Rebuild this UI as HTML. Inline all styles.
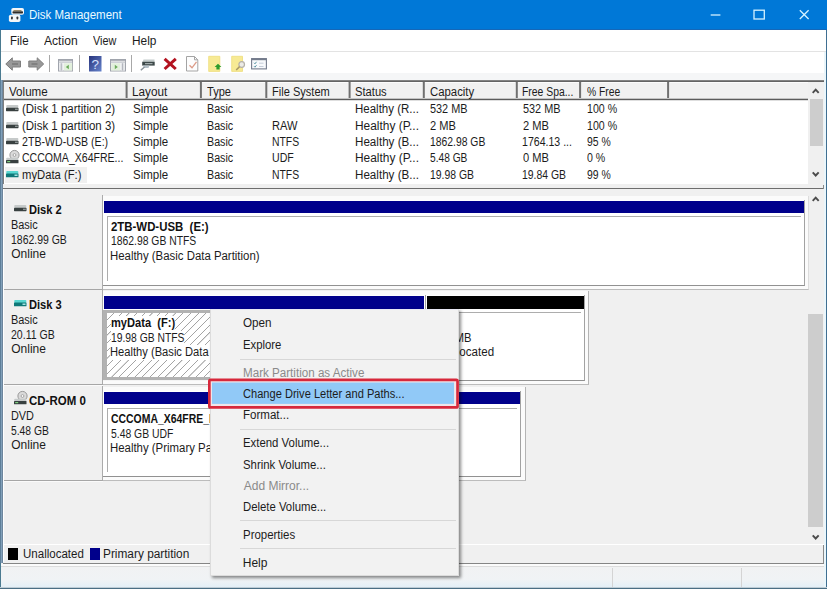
<!DOCTYPE html>
<html><head><meta charset="utf-8"><title>Disk Management</title>
<style>
html,body{margin:0;padding:0;}
body{width:827px;height:589px;position:relative;overflow:hidden;background:#f0f0f0;font-family:"Liberation Sans",sans-serif;font-size:12px;color:#1a1a1a;}
.a{position:absolute;}
.t{position:absolute;white-space:nowrap;line-height:14px;font-size:12px;color:#1c1c1c;transform-origin:0 50%;}
.b{font-weight:bold;color:#111;}
.g{color:#8a8a8a;}
svg{position:absolute;overflow:visible;}
</style></head><body>
<div class="a" style="left:0px;top:0px;width:827px;height:30px;background:#0078d7;"></div>
<div class="t " style="left:30px;top:7.75px;color:#eafaff;margin-left:-0.96px;transform:scaleX(0.958);">Disk Management</div>
<svg style="left:8px;top:7px" width="17" height="16" viewBox="0 0 17 16"><rect x="3.300" y="1" width="12.700" height="6.800" rx="1.800" fill="#f4f6f8"/><rect x="4.500" y="4.200" width="10.500" height="2.300" rx="0.800" fill="#2c2c2c"/><rect x="5.500" y="3" width="8" height="1.200" fill="#9a8a6a"/><rect x="0.900" y="7.800" width="11.500" height="7.200" rx="1.800" fill="#f4f6f8"/><rect x="3" y="9.500" width="1.800" height="3" rx="0.800" fill="#333"/><rect x="8.500" y="9.500" width="1.800" height="3" rx="0.800" fill="#333"/></svg>
<svg style="left:700px;top:0" width="127" height="30" viewBox="0 0 127 30" fill="none" stroke="#d4f2ff" stroke-width="1.300"><path d="M10.700 15h9.700"/><rect x="54" y="10.200" width="10.300" height="8.800"/><path d="M99.800 10.200l8.800 8.800M108.600 10.200l-8.800 8.800"/></svg>
<div class="a" style="left:1px;top:30px;width:825px;height:21px;background:#fff;"></div>
<div class="t " style="left:10.75px;top:33.5px;margin-left:-0.96px;transform:scaleX(0.958);">File</div>
<div class="t " style="left:43.75px;top:33.5px;margin-left:-0.00px;transform:scaleX(1.008);">Action</div>
<div class="t " style="left:93px;top:33.5px;margin-left:-0.00px;transform:scaleX(0.903);">View</div>
<div class="t " style="left:132.5px;top:33.5px;margin-left:-0.99px;transform:scaleX(0.989);">Help</div>
<div class="a" style="left:1px;top:51px;width:825px;height:1px;background:#e3e3e3;"></div>
<div class="a" style="left:1px;top:52px;width:825px;height:21.3px;background:#fff;"></div>
<div class="a" style="left:1px;top:73px;width:825px;height:7px;background:#f5f6f7;"></div>
<svg style="left:5px;top:57px" width="16" height="14" viewBox="0 0 16 14"><path d="M0.800 7L7.300 0.800V4H15.500V10H7.300V13.200Z" fill="#999" stroke="#7e7e7e" stroke-width="1"/><rect x="7" y="6.200" width="6" height="1.600" fill="#7c7c7c"/></svg>
<svg style="left:28px;top:57px" width="16" height="14" viewBox="0 0 16 14"><path d="M15.700 7L9.200 0.800V4H0.800V10H9.200V13.200Z" fill="#999" stroke="#7e7e7e" stroke-width="1"/><rect x="3.500" y="6.200" width="6" height="1.600" fill="#7c7c7c"/></svg>
<div class="a" style="left:49.0px;top:55px;width:1px;height:17px;background:#a8a8a8;"></div>
<div class="a" style="left:79.0px;top:55px;width:1px;height:17px;background:#a8a8a8;"></div>
<div class="a" style="left:131.0px;top:55px;width:1px;height:17px;background:#a8a8a8;"></div>
<svg style="left:58px;top:58.8px" width="15" height="12.5" viewBox="0 0 15 12.5"><rect x="0.500" y="0.500" width="14" height="11.500" fill="#f6f6f6" stroke="#a0a4ac"/><rect x="0.500" y="0.500" width="14" height="1.300" fill="#a0a4ac"/><rect x="0.500" y="2.600" width="14" height="1" fill="#b4b8c0"/><rect x="1.300" y="4.200" width="4" height="7.300" fill="#e4e6ea"/><rect x="2.800" y="4.200" width="0.900" height="7.300" fill="#a8acb4"/><rect x="6" y="4.200" width="8.200" height="7.300" fill="#e2f0dc"/><path d="M10.800 5.800L7.800 8L10.800 10.200Z" fill="#6aaa5a"/></svg>
<svg style="left:89px;top:56px" width="12.5" height="15.5" viewBox="0 0 12.5 15.5"><defs><linearGradient id="hg" x1="0" y1="0" x2="1" y2="1"><stop offset="0" stop-color="#28347c"/><stop offset="1" stop-color="#6684cc"/></linearGradient></defs><rect x="0" y="0" width="12.500" height="15.500" fill="url(#hg)"/><text x="6.300" y="12.800" text-anchor="middle" font-family="Liberation Sans, sans-serif" font-size="13.500" fill="#d6e2ff">?</text></svg>
<svg style="left:110px;top:58.8px" width="16" height="12.5" viewBox="0 0 16 12.5"><rect x="0.500" y="0.500" width="15" height="11.500" fill="#f6f6f6" stroke="#a0a4ac"/><rect x="0.500" y="0.500" width="15" height="1.300" fill="#a0a4ac"/><rect x="0.500" y="2.600" width="15" height="1" fill="#b4b8c0"/><rect x="10.700" y="4.200" width="4" height="7.300" fill="#e4e6ea"/><rect x="12.200" y="4.200" width="0.900" height="7.300" fill="#a8acb4"/><rect x="1.300" y="4.200" width="8.800" height="7.300" fill="#e2f0dc"/><path d="M4.800 5.800L7.800 8L4.800 10.200Z" fill="#6aaa5a"/></svg>
<svg style="left:140px;top:59px" width="15" height="12" viewBox="0 0 15 12"><path d="M3.500 0.500H14.500V3H2.500Z" fill="#c4cccc"/><path d="M2.200 2.800H14.700V6.600H2.200Z" fill="#3c4848"/><rect x="5" y="4.100" width="7.500" height="1.100" fill="#aab4b4"/><path d="M3 6.600H9.500L8.500 9H4Z" fill="#b4c0c8"/><path d="M4.500 8L0.800 11.300" stroke="#8a949a" stroke-width="1.500" fill="none"/></svg>
<svg style="left:163px;top:57px" width="14.5" height="13.5" viewBox="0 0 14.5 13.5"><path d="M1.600 1.800L12.800 12M12.800 1.800L1.600 12" stroke="#b3121f" stroke-width="3" fill="none"/></svg>
<svg style="left:186px;top:56px" width="12.5" height="15.5" viewBox="0 0 12.5 15.5"><path d="M0.500 0.500H8.500L11.800 3.800V15H0.500Z" fill="#fdfdfd" stroke="#a4a4a4"/><path d="M8.500 0.500V3.800H11.800" fill="none" stroke="#a4a4a4"/><path d="M3.500 9.300L6 11.800L10.500 5.800" fill="none" stroke="#dc9a86" stroke-width="1.300"/></svg>
<svg style="left:208px;top:56px" width="14" height="15.5" viewBox="0 0 14 15.5"><path d="M0.700 0.300H11.800V15.400H0.700Z" fill="#f7ea94" stroke="#eedc78" stroke-width="0.800"/><path d="M10 7.800L13.400 11H11.600V13.600H8.400V11H6.600Z" fill="#2c9c2c"/></svg>
<svg style="left:231px;top:56px" width="14.5" height="15.5" viewBox="0 0 14.5 15.5"><path d="M0.700 0.300H11.500V15.400H0.700Z" fill="#f7ea94" stroke="#eedc78" stroke-width="0.800"/><circle cx="10.700" cy="8.500" r="2.800" fill="#ecebe6" stroke="#b4b0a8" stroke-width="1.200"/><path d="M8.600 10.600L5.200 14" stroke="#a89868" stroke-width="1.500"/></svg>
<svg style="left:251px;top:58px" width="16" height="11.5" viewBox="0 0 16 11.5"><rect x="0.600" y="0.600" width="14.800" height="10.300" fill="#f8fafc" stroke="#747c8c" stroke-width="1.100"/><rect x="0.600" y="0.600" width="14.800" height="1.600" fill="#747c8c"/><path d="M3 4.800l1 1l1.500-2M3 8.200l1 1l1.500-2" fill="none" stroke="#4a8a9a" stroke-width="0.900"/><path d="M8 5.200h4.500M8 8.500h4.500" stroke="#c4ccd8" stroke-width="1"/></svg>
<div class="a" style="left:3px;top:82px;width:821px;height:102px;background:#fff;"></div>
<div class="a" style="left:3px;top:82px;width:1px;height:102px;background:#7f7f7f;"></div>
<div class="a" style="left:4px;top:82px;width:804px;height:17px;background:#f1f1f1;"></div>
<div class="a" style="left:4px;top:82px;width:804px;height:1px;background:#fcfcfc;"></div>
<div class="a" style="left:125px;top:82px;width:1px;height:17px;background:#bdbdbd;"></div>
<div class="a" style="left:126px;top:82px;width:1px;height:17px;background:#707070;"></div>
<div class="a" style="left:127px;top:82px;width:1px;height:17px;background:#a4a4a4;"></div>
<div class="a" style="left:199px;top:82px;width:1px;height:17px;background:#e4e4e4;"></div>
<div class="a" style="left:200px;top:82px;width:1px;height:17px;background:#707070;"></div>
<div class="a" style="left:201px;top:82px;width:1px;height:17px;background:#7d7d7d;"></div>
<div class="a" style="left:265px;top:82px;width:1px;height:17px;background:#979797;"></div>
<div class="a" style="left:266px;top:82px;width:1px;height:17px;background:#707070;"></div>
<div class="a" style="left:267px;top:82px;width:1px;height:17px;background:#cacaca;"></div>
<div class="a" style="left:348px;top:82px;width:1px;height:17px;background:#bdbdbd;"></div>
<div class="a" style="left:349px;top:82px;width:1px;height:17px;background:#707070;"></div>
<div class="a" style="left:350px;top:82px;width:1px;height:17px;background:#a4a4a4;"></div>
<div class="a" style="left:422px;top:82px;width:1px;height:17px;background:#d7d7d7;"></div>
<div class="a" style="left:423px;top:82px;width:1px;height:17px;background:#707070;"></div>
<div class="a" style="left:424px;top:82px;width:1px;height:17px;background:#8a8a8a;"></div>
<div class="a" style="left:515px;top:82px;width:1px;height:17px;background:#d7d7d7;"></div>
<div class="a" style="left:516px;top:82px;width:1px;height:17px;background:#707070;"></div>
<div class="a" style="left:517px;top:82px;width:1px;height:17px;background:#8a8a8a;"></div>
<div class="a" style="left:579px;top:82px;width:1px;height:17px;background:#7d7d7d;"></div>
<div class="a" style="left:580px;top:82px;width:1px;height:17px;background:#707070;"></div>
<div class="a" style="left:581px;top:82px;width:1px;height:17px;background:#e4e4e4;"></div>
<div class="a" style="left:667px;top:82px;width:1px;height:17px;background:#7d7d7d;"></div>
<div class="a" style="left:668px;top:82px;width:1px;height:17px;background:#707070;"></div>
<div class="a" style="left:669px;top:82px;width:1px;height:17px;background:#e4e4e4;"></div>
<div class="a" style="left:4px;top:98px;width:804px;height:1px;background:#c4c4c4;"></div>
<div class="a" style="left:4px;top:99px;width:804px;height:1px;background:#5c5c5c;"></div>
<div class="a" style="left:4px;top:100px;width:804px;height:1px;background:#dedede;"></div>
<div class="a" style="left:3px;top:80px;width:821.5px;height:1px;background:#838383;"></div>
<div class="a" style="left:3px;top:81px;width:821.5px;height:1px;background:#646464;"></div>
<div class="t " style="left:9.25px;top:84.5px;margin-left:-0.00px;transform:scaleX(0.968);">Volume</div>
<div class="t " style="left:133.25px;top:84.5px;margin-left:-0.98px;transform:scaleX(0.979);">Layout</div>
<div class="t " style="left:207.5px;top:84.5px;margin-left:-0.23px;transform:scaleX(0.921);">Type</div>
<div class="t " style="left:272.5px;top:84.5px;margin-left:-0.92px;transform:scaleX(0.922);">File System</div>
<div class="t " style="left:355.5px;top:84.5px;margin-left:-0.47px;transform:scaleX(0.932);">Status</div>
<div class="t " style="left:430.5px;top:84.5px;margin-left:-0.47px;transform:scaleX(0.946);">Capacity</div>
<div class="t " style="left:523px;top:84.5px;margin-left:-0.86px;transform:scaleX(0.865);">Free Spa...</div>
<div class="t " style="left:587.5px;top:84.5px;margin-left:-0.43px;transform:scaleX(0.861);">% Free</div>
<div class="a" style="left:5px;top:167px;width:82px;height:16px;background:#f0f0f0;"></div>
<div class="t " style="left:22.5px;top:102px;margin-left:-0.72px;transform:scaleX(0.956);">(Disk 1 partition 2)</div>
<div class="t " style="left:133.25px;top:102px;margin-left:-0.48px;transform:scaleX(0.958);">Simple</div>
<div class="t " style="left:207.5px;top:102px;margin-left:-0.89px;transform:scaleX(0.893);">Basic</div>
<div class="t " style="left:355.5px;top:102px;margin-left:-0.96px;transform:scaleX(0.958);">Healthy (R...</div>
<div class="t " style="left:430.5px;top:102px;margin-left:-0.45px;transform:scaleX(0.907);">532 MB</div>
<div class="t " style="left:523px;top:102px;margin-left:-0.45px;transform:scaleX(0.907);">532 MB</div>
<div class="t " style="left:587.5px;top:102px;margin-left:-0.89px;transform:scaleX(0.885);">100 %</div>
<div class="t " style="left:22.5px;top:118.5px;margin-left:-0.72px;transform:scaleX(0.956);">(Disk 1 partition 3)</div>
<div class="t " style="left:133.25px;top:118.5px;margin-left:-0.48px;transform:scaleX(0.958);">Simple</div>
<div class="t " style="left:207.5px;top:118.5px;margin-left:-0.89px;transform:scaleX(0.893);">Basic</div>
<div class="t " style="left:272.5px;top:118.5px;margin-left:-0.92px;transform:scaleX(0.925);">RAW</div>
<div class="t " style="left:355.5px;top:118.5px;margin-left:-0.99px;transform:scaleX(0.992);">Healthy (P...</div>
<div class="t " style="left:430.5px;top:118.5px;margin-left:-0.46px;transform:scaleX(0.926);">2 MB</div>
<div class="t " style="left:523px;top:118.5px;margin-left:-0.46px;transform:scaleX(0.926);">2 MB</div>
<div class="t " style="left:587.5px;top:118.5px;margin-left:-0.89px;transform:scaleX(0.885);">100 %</div>
<div class="t " style="left:22.5px;top:135px;margin-left:-0.44px;transform:scaleX(0.885);">2TB-WD-USB (E:)</div>
<div class="t " style="left:133.25px;top:135px;margin-left:-0.48px;transform:scaleX(0.958);">Simple</div>
<div class="t " style="left:207.5px;top:135px;margin-left:-0.89px;transform:scaleX(0.893);">Basic</div>
<div class="t " style="left:272.5px;top:135px;margin-left:-0.87px;transform:scaleX(0.866);">NTFS</div>
<div class="t " style="left:355.5px;top:135px;margin-left:-0.97px;transform:scaleX(0.969);">Healthy (B...</div>
<div class="t " style="left:430.5px;top:135px;margin-left:-0.86px;transform:scaleX(0.864);">1862.98 GB</div>
<div class="t " style="left:523px;top:135px;margin-left:-0.88px;transform:scaleX(0.881);">1764.13 ...</div>
<div class="t " style="left:587.5px;top:135px;margin-left:-0.43px;transform:scaleX(0.868);">95 %</div>
<div class="t " style="left:22.5px;top:151.25px;margin-left:-0.44px;transform:scaleX(0.879);">CCCOMA_X64FRE...</div>
<div class="t " style="left:133.25px;top:151.25px;margin-left:-0.48px;transform:scaleX(0.958);">Simple</div>
<div class="t " style="left:207.5px;top:151.25px;margin-left:-0.89px;transform:scaleX(0.893);">Basic</div>
<div class="t " style="left:272.5px;top:151.25px;margin-left:-0.88px;transform:scaleX(0.882);">UDF</div>
<div class="t " style="left:355.5px;top:151.25px;margin-left:-0.99px;transform:scaleX(0.992);">Healthy (P...</div>
<div class="t " style="left:430.5px;top:151.25px;margin-left:-0.42px;transform:scaleX(0.849);">5.48 GB</div>
<div class="t " style="left:523px;top:151.25px;margin-left:-0.46px;transform:scaleX(0.926);">0 MB</div>
<div class="t " style="left:587.5px;top:151.25px;margin-left:-0.44px;transform:scaleX(0.886);">0 %</div>
<div class="t " style="left:22.5px;top:167.5px;margin-left:-0.70px;transform:scaleX(0.939);">myData (F:)</div>
<div class="t " style="left:133.25px;top:167.5px;margin-left:-0.48px;transform:scaleX(0.958);">Simple</div>
<div class="t " style="left:207.5px;top:167.5px;margin-left:-0.89px;transform:scaleX(0.893);">Basic</div>
<div class="t " style="left:272.5px;top:167.5px;margin-left:-0.87px;transform:scaleX(0.866);">NTFS</div>
<div class="t " style="left:355.5px;top:167.5px;margin-left:-0.97px;transform:scaleX(0.969);">Healthy (B...</div>
<div class="t " style="left:430.5px;top:167.5px;margin-left:-0.87px;transform:scaleX(0.867);">19.98 GB</div>
<div class="t " style="left:523px;top:167.5px;margin-left:-0.87px;transform:scaleX(0.867);">19.84 GB</div>
<div class="t " style="left:587.5px;top:167.5px;margin-left:-0.43px;transform:scaleX(0.868);">99 %</div>
<svg style="left:6.4px;top:105px" width="12.500" height="6.500" viewBox="0 0 12.500 6.500"><rect x="0.300" y="0" width="12" height="3" rx="0.800" fill="#c6caca"/><rect x="0" y="2.800" width="12.500" height="3.400" rx="0.600" fill="#384040"/><rect x="9" y="3.700" width="2.800" height="1.200" fill="#98a0a0"/></svg>
<svg style="left:6.4px;top:121.5px" width="12.500" height="6.500" viewBox="0 0 12.500 6.500"><rect x="0.300" y="0" width="12" height="3" rx="0.800" fill="#c6caca"/><rect x="0" y="2.800" width="12.500" height="3.400" rx="0.600" fill="#384040"/><rect x="9" y="3.700" width="2.800" height="1.200" fill="#98a0a0"/></svg>
<svg style="left:6.4px;top:138px" width="12.500" height="6.500" viewBox="0 0 12.500 6.500"><rect x="0.300" y="0" width="12" height="3" rx="0.800" fill="#c6caca"/><rect x="0" y="2.800" width="12.500" height="3.400" rx="0.600" fill="#384040"/><rect x="9" y="3.700" width="2.800" height="1.200" fill="#98a0a0"/></svg>
<svg style="left:6.4px;top:150.3px" width="13" height="14" viewBox="0 0 13 14"><circle cx="8.500" cy="5" r="4.600" fill="#dadada" stroke="#909090" stroke-width="0.900"/><circle cx="8.500" cy="5" r="1.400" fill="#fff" stroke="#8a8a8a" stroke-width="0.700"/><rect x="0.300" y="7.800" width="12" height="3" rx="0.800" fill="#c6caca"/><rect x="0" y="10" width="12.500" height="3.300" rx="0.600" fill="#384040"/><rect x="1.200" y="11" width="3" height="1.200" fill="#7fd07f"/></svg>
<svg style="left:6.4px;top:170.5px" width="12.500" height="6.500" viewBox="0 0 12.500 6.500"><rect x="0.300" y="0" width="12" height="3" rx="0.800" fill="#58d6d0"/><rect x="0" y="2.500" width="12.500" height="3.800" rx="0.600" fill="#0f7878"/><rect x="8.500" y="3.600" width="3" height="1.200" fill="#c8ffff"/></svg>
<div class="a" style="left:808px;top:81.8px;width:16.5px;height:102px;background:#f0f0f0;"></div>
<div class="a" style="left:809.5px;top:99px;width:13px;height:47px;background:#cdcdcd;"></div>
<svg style="left:812.1px;top:87.9px" width="7.400" height="6.200" viewBox="0 0 7.400 6.200"><path d="M0.700 4.900L3.700 1.700L6.700 4.900" fill="none" stroke="#4c4c4c" stroke-width="1.900"/></svg>
<svg style="left:812.1px;top:171.3px" width="7.400" height="6.200" viewBox="0 0 7.400 6.200"><path d="M0.700 1.300L3.700 4.500L6.700 1.300" fill="none" stroke="#4c4c4c" stroke-width="1.900"/></svg>
<div class="a" style="left:3px;top:188.2px;width:820.5px;height:1.2px;background:#6e6e6e;"></div>
<div class="a" style="left:823px;top:185px;width:1px;height:4px;background:#8a8a8a;"></div>
<div class="a" style="left:3px;top:189.4px;width:1px;height:373px;background:#fff;"></div>
<div class="a" style="left:808px;top:314px;width:14.5px;height:213px;background:#cdcdcd;"></div>
<svg style="left:812.1px;top:195.5px" width="7.400" height="6.200" viewBox="0 0 7.400 6.200"><path d="M0.700 4.900L3.700 1.700L6.700 4.900" fill="none" stroke="#4c4c4c" stroke-width="1.900"/></svg>
<svg style="left:812.1px;top:533.6px" width="7.400" height="6.200" viewBox="0 0 7.400 6.200"><path d="M0.700 1.300L3.700 4.500L6.700 1.300" fill="none" stroke="#4c4c4c" stroke-width="1.900"/></svg>
<div class="a" style="left:4px;top:195px;width:98.8px;height:94.5px;background:#f0f0f0;border-right:1px solid #ababab;border-bottom:1px solid #a6a6a6;box-sizing:border-box;"></div>
<div class="a" style="left:4px;top:289.5px;width:99px;height:1px;background:#fafafa;"></div>
<svg style="left:13.5px;top:204.5px" width="12.500" height="6.500" viewBox="0 0 12.500 6.500"><rect x="0.300" y="0" width="12" height="3" rx="0.800" fill="#c6caca"/><rect x="0" y="2.800" width="12.500" height="3.400" rx="0.600" fill="#384040"/><rect x="9" y="3.700" width="2.800" height="1.200" fill="#98a0a0"/></svg>
<div class="t b" style="left:29.5px;top:203.0px;margin-left:-0.70px;transform:scaleX(0.927);">Disk 2</div>
<div class="t " style="left:11.75px;top:218.2px;margin-left:-0.91px;transform:scaleX(0.911);">Basic</div>
<div class="t " style="left:11.75px;top:232.64999999999998px;margin-left:-0.87px;transform:scaleX(0.872);">1862.99 GB</div>
<div class="t " style="left:11.75px;top:247.1px;margin-left:-0.50px;transform:scaleX(1.000);">Online</div>
<div class="a" style="left:4px;top:289.5px;width:98.8px;height:95.39999999999998px;background:#f0f0f0;border-right:1px solid #ababab;border-bottom:1px solid #a6a6a6;box-sizing:border-box;"></div>
<div class="a" style="left:4px;top:384.9px;width:99px;height:1px;background:#fafafa;"></div>
<svg style="left:13.5px;top:300.0px" width="12.500" height="6.500" viewBox="0 0 12.500 6.500"><rect x="0.300" y="0" width="12" height="3" rx="0.800" fill="#58d6d0"/><rect x="0" y="2.500" width="12.500" height="3.800" rx="0.600" fill="#0f7878"/><rect x="8.500" y="3.600" width="3" height="1.200" fill="#c8ffff"/></svg>
<div class="t b" style="left:29.5px;top:298.0px;margin-left:-0.70px;transform:scaleX(0.927);">Disk 3</div>
<div class="t " style="left:11.75px;top:313.2px;margin-left:-0.91px;transform:scaleX(0.911);">Basic</div>
<div class="t " style="left:11.75px;top:327.65px;margin-left:-0.44px;transform:scaleX(0.877);">20.11 GB</div>
<div class="t " style="left:11.75px;top:342.09999999999997px;margin-left:-0.50px;transform:scaleX(1.000);">Online</div>
<div class="a" style="left:4px;top:385.5px;width:98.8px;height:95.5px;background:#f0f0f0;border-right:1px solid #ababab;border-bottom:1px solid #a6a6a6;box-sizing:border-box;"></div>
<div class="a" style="left:4px;top:481px;width:99px;height:1px;background:#fafafa;"></div>
<svg style="left:13.5px;top:391.0px" width="13" height="14" viewBox="0 0 13 14"><circle cx="8.500" cy="5" r="4.600" fill="#dadada" stroke="#909090" stroke-width="0.900"/><circle cx="8.500" cy="5" r="1.400" fill="#fff" stroke="#8a8a8a" stroke-width="0.700"/><rect x="0.300" y="7.800" width="12" height="3" rx="0.800" fill="#c6caca"/><rect x="0" y="10" width="12.500" height="3.300" rx="0.600" fill="#384040"/><rect x="1.200" y="11" width="3" height="1.200" fill="#7fd07f"/></svg>
<div class="t b" style="left:29.5px;top:394.0px;margin-left:-0.48px;transform:scaleX(0.957);">CD-ROM 0</div>
<div class="t " style="left:11.75px;top:409.2px;margin-left:-0.91px;transform:scaleX(0.905);">DVD</div>
<div class="t " style="left:11.75px;top:423.65px;margin-left:-0.43px;transform:scaleX(0.860);">5.48 GB</div>
<div class="t " style="left:11.75px;top:438.09999999999997px;margin-left:-0.50px;transform:scaleX(1.000);">Online</div>
<div class="a" style="left:103px;top:195.500px;width:705.500px;height:94.200px;background:#fbfbfb;border-right:1px solid #dcdcdc;border-bottom:1px solid #bcbcbc;box-sizing:border-box;"></div>
<div class="a" style="left:103.2px;top:199.5px;width:702.0999999999999px;height:86.5px;background:#fff;box-sizing:border-box;border-right:1px solid #a2a2a2;border-bottom:1px solid #919191;"></div>
<div class="a" style="left:104.2px;top:201px;width:699.8px;height:12.2px;background:#00008b;"></div>
<div class="a" style="left:107.2px;top:216.4px;width:693.8px;height:64.5px;box-sizing:border-box;border-top:1px solid #adadad;border-left:1px solid #adadad;"></div>
<div class="t b" style="left:111.4px;top:219.9px;margin-left:-0.48px;transform:scaleX(0.951);">2TB-WD-USB&nbsp; (E:)</div>
<div class="t " style="left:111.4px;top:234.4px;margin-left:-0.86px;transform:scaleX(0.864);">1862.98 GB NTFS</div>
<div class="t " style="left:111.4px;top:248.9px;margin-left:-0.95px;transform:scaleX(0.950);">Healthy (Basic Data Partition)</div>
<div class="a" style="left:103px;top:290.500px;width:486px;height:94.400px;background:#fbfbfb;border-right:1px solid #b4b4b4;border-bottom:1px solid #bcbcbc;box-sizing:border-box;"></div>
<div class="a" style="left:103.2px;top:294.9px;width:322.6px;height:86.30000000000001px;background:#fff;box-sizing:border-box;border-right:1px solid #a2a2a2;border-bottom:1px solid #f4f4f4;"></div>
<div class="a" style="left:104.2px;top:296.4px;width:320.3px;height:12.2px;background:#00008b;"></div>
<div class="a" style="left:103.4px;top:309.59999999999997px;width:322.1px;height:70.20000000000002px;box-sizing:border-box;border:3px solid #b2b2b2;border-left-width:4px;background:repeating-linear-gradient(135deg,#fff 0,#fff 4.500px,#a4a4a4 4.650px,#a4a4a4 5.250px,#fff 5.440px);"></div>
<div class="t b" style="left:111.4px;top:316.09999999999997px;background:#fff;line-height:14.5px;margin-left:-0.69px;transform:scaleX(0.924);">myData&nbsp; (F:)</div>
<div class="t " style="left:111.4px;top:330.59999999999997px;background:#fff;line-height:14.5px;margin-left:-0.86px;transform:scaleX(0.860);">19.98 GB NTFS</div>
<div class="t " style="left:111.4px;top:345.09999999999997px;background:#fff;line-height:14.5px;margin-left:-0.93px;transform:scaleX(0.930);">Healthy (Basic Data Partition)</div>
<div class="a" style="left:426px;top:294.9px;width:159.00000000000006px;height:86.30000000000001px;background:#fff;box-sizing:border-box;border-right:1px solid #a2a2a2;border-bottom:1px solid #919191;"></div>
<div class="a" style="left:427px;top:296.4px;width:156.70000000000005px;height:12.2px;background:#000;"></div>
<div class="a" style="left:430px;top:311.79999999999995px;width:150.70000000000005px;height:64.30000000000001px;box-sizing:border-box;border-top:1px solid #adadad;border-left:1px solid #adadad;"></div>
<div class="t " style="left:434.2px;top:330.59999999999997px;margin-left:-0.93px;transform:scaleX(0.931);">130 MB</div>
<div class="t " style="left:434.2px;top:345.09999999999997px;margin-left:-0.96px;transform:scaleX(0.964);">Unallocated</div>
<div class="a" style="left:103px;top:386.500px;width:422.500px;height:94.300px;background:#fbfbfb;border-right:1px solid #b4b4b4;border-bottom:1px solid #bcbcbc;box-sizing:border-box;"></div>
<div class="a" style="left:103.2px;top:390.7px;width:418.1px;height:86.0px;background:#fff;box-sizing:border-box;border-right:1px solid #a2a2a2;border-bottom:1px solid #919191;"></div>
<div class="a" style="left:104.2px;top:392.2px;width:415.8px;height:12.2px;background:#00008b;"></div>
<div class="a" style="left:107.2px;top:407.59999999999997px;width:409.8px;height:64.0px;box-sizing:border-box;border-top:1px solid #adadad;border-left:1px solid #adadad;"></div>
<div class="t b" style="left:111.4px;top:412.09999999999997px;margin-left:-0.43px;transform:scaleX(0.869);">CCCOMA_X64FRE_EN-US_DV9 (D:)</div>
<div class="t " style="left:111.4px;top:426.59999999999997px;margin-left:-0.43px;transform:scaleX(0.866);">5.48 GB UDF</div>
<div class="t " style="left:111.4px;top:441.09999999999997px;margin-left:-0.95px;transform:scaleX(0.950);">Healthy (Primary Partition)</div>
<div class="a" style="left:4px;top:544.3px;width:820px;height:1px;background:#fff;"></div>
<div class="a" style="left:8px;top:548px;width:10px;height:11.7px;background:#000;"></div>
<div class="t " style="left:23.75px;top:547px;margin-left:-0.96px;transform:scaleX(0.960);">Unallocated</div>
<div class="a" style="left:89.7px;top:548px;width:10px;height:11.7px;background:#00008b;"></div>
<div class="t " style="left:104.25px;top:547px;margin-left:-0.99px;transform:scaleX(0.988);">Primary partition</div>
<div class="a" style="left:3px;top:562.8px;width:821.5px;height:1px;background:#858585;"></div>
<div class="a" style="left:1px;top:563.8px;width:825px;height:2px;background:#fbfbfb;"></div>
<div class="a" style="left:1px;top:565.8px;width:825px;height:0.7px;background:#dcdcdc;"></div>
<div class="a" style="left:1px;top:566.5px;width:825px;height:21.5px;background:linear-gradient(180deg,#f1f2f3 0,#f0f3f5 60%,#e2eff7 100%);"></div>
<div class="a" style="left:612px;top:567.5px;width:1px;height:20px;background:#d4d4d4;"></div>
<div class="a" style="left:741px;top:567.5px;width:1px;height:20px;background:#d4d4d4;"></div>
<div class="a" style="left:210px;top:309px;width:248.500px;height:266.500px;background:#f2f2f2;border:1px solid #dcdcdc;border-top-color:#e8e8f4;box-sizing:border-box;box-shadow:2px 2px 3px rgba(0,0,0,0.45);"></div>
<svg style="left:207px;top:377px" width="254" height="33" viewBox="0 0 254 33"><rect x="2.350" y="2.950" width="248.200" height="27.500" rx="1.300" fill="#f1e4e8" stroke="#d7283b" stroke-width="2.700"/><rect x="5" y="5.500" width="242" height="21.400" fill="#91c9f7"/></svg>
<div class="a" style="left:240px;top:358.5px;width:216px;height:1px;background:#d7d7d7;"></div>
<div class="a" style="left:240px;top:428.5px;width:216px;height:1px;background:#d7d7d7;"></div>
<div class="a" style="left:240px;top:520.0px;width:216px;height:1px;background:#d7d7d7;"></div>
<div class="a" style="left:240px;top:548.0px;width:216px;height:1px;background:#d7d7d7;"></div>
<div class="t " style="left:243.75px;top:316px;margin-left:-0.49px;transform:scaleX(0.973);">Open</div>
<div class="t " style="left:243.75px;top:337.5px;margin-left:-0.94px;transform:scaleX(0.943);">Explore</div>
<div class="t g" style="left:243.75px;top:365.5px;margin-left:-0.97px;transform:scaleX(0.968);">Mark Partition as Active</div>
<div class="t " style="left:243.75px;top:387px;margin-left:-0.46px;transform:scaleX(0.924);">Change Drive Letter and Paths...</div>
<div class="t " style="left:243.75px;top:408px;margin-left:-0.96px;transform:scaleX(0.962);">Format...</div>
<div class="t " style="left:243.75px;top:436px;margin-left:-0.95px;transform:scaleX(0.949);">Extend Volume...</div>
<div class="t " style="left:243.75px;top:457.5px;margin-left:-0.47px;transform:scaleX(0.948);">Shrink Volume...</div>
<div class="t g" style="left:243.75px;top:479px;margin-left:-0.00px;transform:scaleX(1.000);">Add Mirror...</div>
<div class="t " style="left:243.75px;top:500px;margin-left:-0.94px;transform:scaleX(0.945);">Delete Volume...</div>
<div class="t " style="left:243.75px;top:527.5px;margin-left:-0.95px;transform:scaleX(0.953);">Properties</div>
<div class="t " style="left:243.75px;top:555.5px;margin-left:-1.00px;transform:scaleX(1.000);">Help</div>
<div class="a" style="left:0px;top:30px;width:1px;height:559px;background:#4a7a90;"></div>
<div class="a" style="left:0px;top:80px;width:3px;height:483px;background:linear-gradient(90deg,#4d6e88,#86a5bf 55%,#5f7489);"></div>
<div class="a" style="left:826px;top:30px;width:1px;height:559px;background:#3f6f92;"></div>
<div class="a" style="left:824px;top:52px;width:2px;height:536px;background:#eaf6fb;"></div>
<div class="a" style="left:0px;top:587px;width:827px;height:1px;background:#beccd5;"></div>
<div class="a" style="left:0px;top:588px;width:827px;height:1px;background:#4a6e84;"></div>
<div class="a" style="left:0px;top:29px;width:827px;height:1px;background:#1567b8;"></div>
<div class="a" style="left:823px;top:545px;width:1px;height:18px;background:#8a8a8a;"></div>
</body></html>
